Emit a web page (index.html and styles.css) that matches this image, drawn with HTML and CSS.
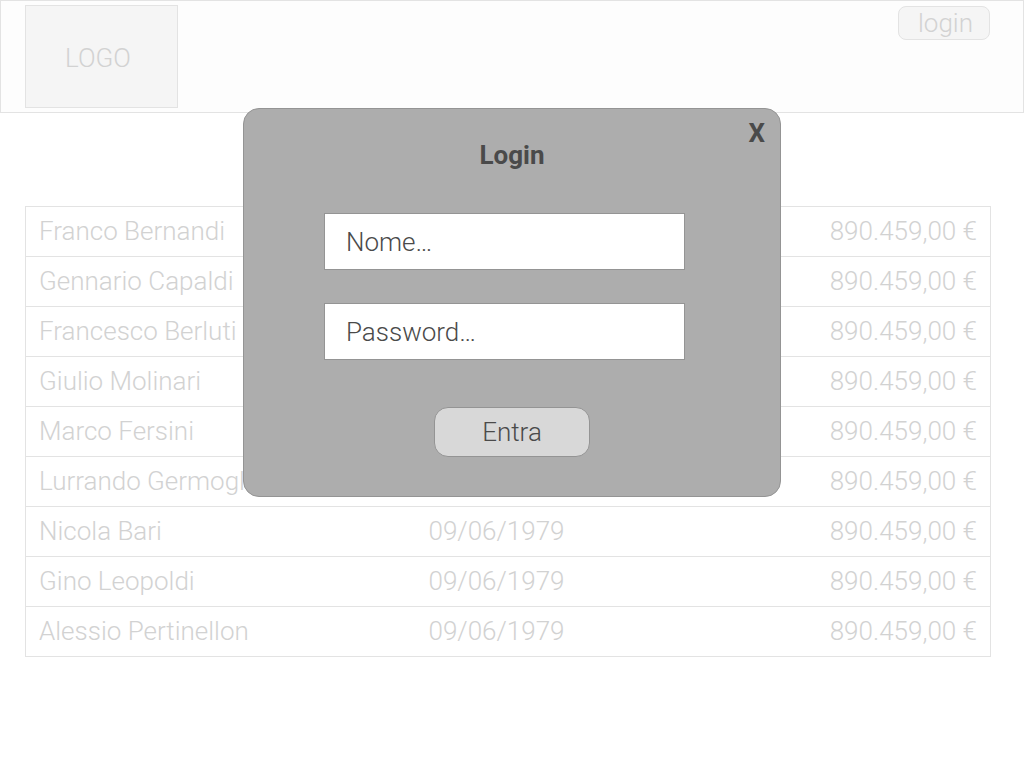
FILE: index.html
```html
<!DOCTYPE html>
<html lang="it">
<head>
<meta charset="utf-8">
<meta name="viewport" content="width=device-width, initial-scale=1">
<title>Login</title>
<link rel="stylesheet" href="styles.css">
</head>
<body>
<header class="header">
  <a class="logo" href="#">LOGO</a>
  <button class="login-button" type="button">login</button>
</header>
<main class="content">
  <table class="people">
    <tbody>
      <tr><td class="name">Franco Bernandi</td><td class="date">09/06/1979</td><td class="amount">890.459,00 €</td></tr>
      <tr><td class="name">Gennario Capaldi</td><td class="date">09/06/1979</td><td class="amount">890.459,00 €</td></tr>
      <tr><td class="name">Francesco Berluti</td><td class="date">09/06/1979</td><td class="amount">890.459,00 €</td></tr>
      <tr><td class="name">Giulio Molinari</td><td class="date">09/06/1979</td><td class="amount">890.459,00 €</td></tr>
      <tr><td class="name">Marco Fersini</td><td class="date">09/06/1979</td><td class="amount">890.459,00 €</td></tr>
      <tr><td class="name">Lurrando Germogli</td><td class="date">09/06/1979</td><td class="amount">890.459,00 €</td></tr>
      <tr><td class="name">Nicola Bari</td><td class="date">09/06/1979</td><td class="amount">890.459,00 €</td></tr>
      <tr><td class="name">Gino Leopoldi</td><td class="date">09/06/1979</td><td class="amount">890.459,00 €</td></tr>
      <tr><td class="name">Alessio Pertinellon</td><td class="date">09/06/1979</td><td class="amount">890.459,00 €</td></tr>
    </tbody>
  </table>
</main>
<div class="overlay">
  <section class="dialog" role="dialog" aria-modal="true" aria-labelledby="dialog-title">
    <button class="close" type="button" aria-label="Chiudi">X</button>
    <h1 class="title" id="dialog-title">Login</h1>
    <form class="form">
      <div class="fields">
        <input class="field" type="text" placeholder="Nome…" aria-label="Nome">
        <input class="field" type="password" placeholder="Password…" aria-label="Password">
      </div>
      <button class="submit" type="submit">Entra</button>
    </form>
  </section>
</div>
</body>
</html>
```
FILE: styles.css
```css
* {
  box-sizing: border-box;
}

body {
  margin: 0;
  background: #fff;
  color: #d2d2d2;
  font: 300 26px/30px Roboto, "Liberation Sans", sans-serif;
}

button,
input {
  font: inherit;
  color: inherit;
}

.header {
  display: flex;
  justify-content: space-between;
  align-items: flex-start;
  padding: 4px 33px 4px 24px;
  border: 1px solid #e3e3e3;
  background: #fdfdfd;
}

.logo {
  padding: 37px 46px 34px 39px;
  border: 1px solid #e3e3e3;
  background: #f5f5f5;
  color: inherit;
  text-decoration: none;
}

.login-button {
  margin: 1px 0 0;
  padding: 1px 16px 1px 19px;
  border: 1px solid #e3e3e3;
  border-radius: 8px;
  background: #f5f5f5;
}

.content {
  padding: 93px 33px 40px 25px;
}

.people {
  width: 100%;
  border: 1px solid #e3e3e3;
  border-collapse: collapse;
  table-layout: fixed;
}

.people tr {
  border-bottom: 1px solid #e3e3e3;
}

.people td {
  height: 50px;
  padding: 0 13px 2px;
  white-space: nowrap;
}

.name {
  width: 40%;
}

.people .date {
  padding-left: 17px;
}

.amount {
  text-align: right;
}

.overlay {
  position: fixed;
  inset: 0;
  display: flex;
  justify-content: center;
  align-items: flex-start;
  padding: 108px 16px 16px;
}

.dialog {
  position: relative;
  width: 100%;
  max-width: 538px;
  padding: 31px 95px 39px 80px;
  border: 1px solid #949494;
  border-radius: 16px;
  background: #adadad;
  color: #4a4a4a;
}

.close {
  position: absolute;
  top: 9px;
  right: 15px;
  padding: 0;
  border: 0;
  background: none;
  font-weight: 700;
}

.title {
  margin: 0 -15px 43px 0;
  font-size: 26px;
  font-weight: 700;
  text-align: center;
}

.form {
  display: flex;
  flex-direction: column;
  gap: 47px;
}

.fields {
  display: flex;
  flex-direction: column;
  gap: 33px;
}

.field {
  width: 100%;
  height: 57px;
  padding: 0 21px;
  border: 1px solid #949494;
  border-radius: 0;
  background: #fff;
}

.field::placeholder {
  color: #4a4a4a;
  opacity: 1;
}

.submit {
  align-self: center;
  margin-right: -15px;
  padding: 9px 47px;
  border: 1px solid #949494;
  border-radius: 14px;
  background: #d8d8d8;
}
```
